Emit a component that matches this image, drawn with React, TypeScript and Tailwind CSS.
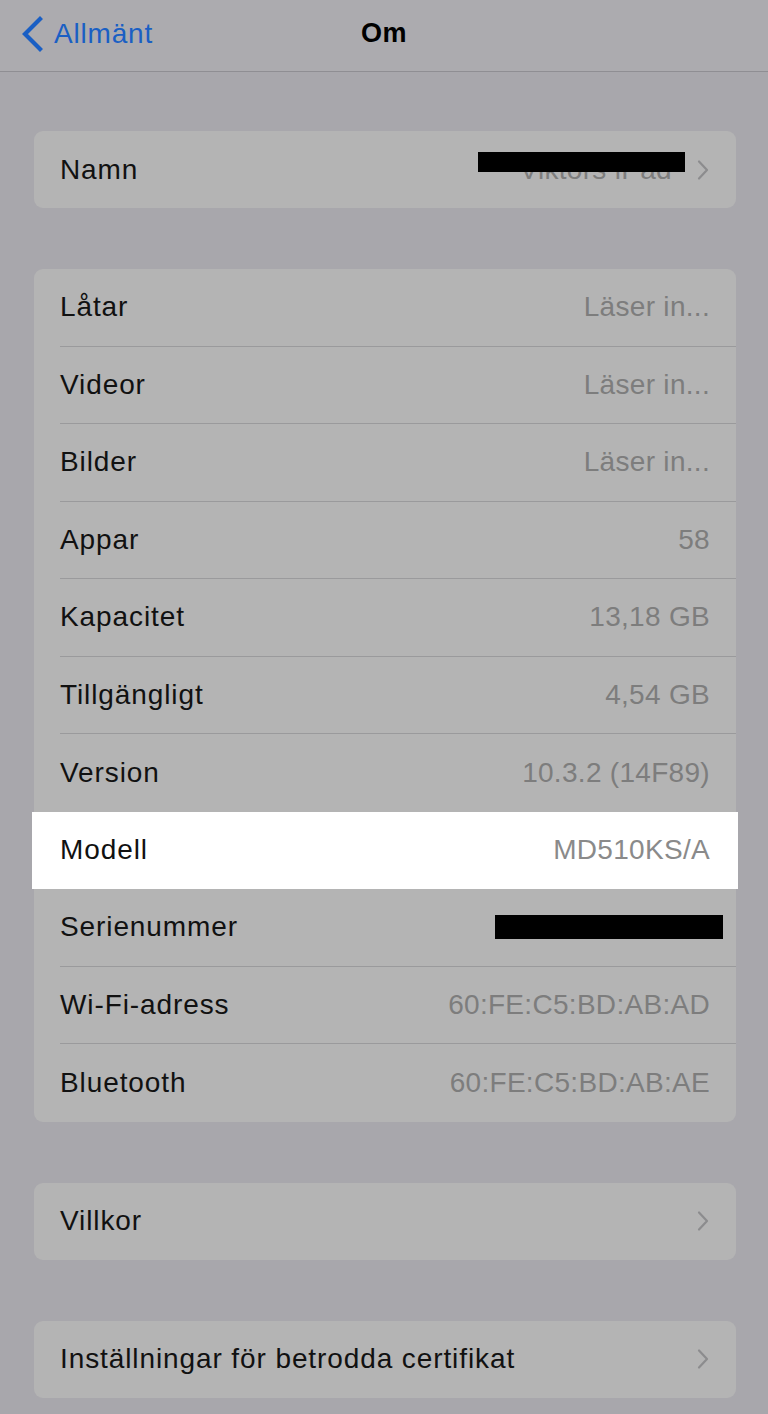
import React from "react";

const font = { fontFamily: '"Liberation Sans", Arial, sans-serif' };

function Chevron() {
  return (
    <svg width="14" height="22" viewBox="0 0 14 22" className="shrink-0">
      <path d="M3 2.5 L11 11 L3 19.5" fill="none" stroke="#8c8c8e" strokeWidth="2.2" strokeLinecap="round" strokeLinejoin="round" />
    </svg>
  );
}

type Row = { label: string; value?: string; redact?: boolean; highlight?: boolean };

const rows: Row[] = [
  { label: "Låtar", value: "Läser in..." },
  { label: "Videor", value: "Läser in..." },
  { label: "Bilder", value: "Läser in..." },
  { label: "Appar", value: "58" },
  { label: "Kapacitet", value: "13,18 GB" },
  { label: "Tillgängligt", value: "4,54 GB" },
  { label: "Version", value: "10.3.2 (14F89)" },
  { label: "Modell", value: "MD510KS/A", highlight: true },
  { label: "Serienummer", redact: true },
  { label: "Wi-Fi-adress", value: "60:FE:C5:BD:AB:AD" },
  { label: "Bluetooth", value: "60:FE:C5:BD:AB:AE" },
];

const labelCls = "text-[#111] tracking-[0.9px]";
const valueCls = "ml-auto text-[#7d7d7d] tracking-[0.3px]";

export default function App() {
  return (
    <div className="w-[768px] h-[1414px] bg-[#a8a7ac] overflow-hidden text-[28px]" style={font}>
      <div className="h-[72px] bg-[#acabaf] border-b border-[#8f8e93] flex items-center relative pb-[4px]">
        <div className="flex items-center pl-[20px] text-[#1a5fc4]">
          <svg width="24" height="36" viewBox="0 0 24 36">
            <path d="M20 3 L5 18 L20 33" fill="none" stroke="#1a5fc4" strokeWidth="4.2" strokeLinecap="square" />
          </svg>
          <span className="ml-[10px] text-[28px] leading-none tracking-[0.8px]">Allmänt</span>
        </div>
        <div className="absolute left-0 right-0 top-[20px] text-center text-[27px] font-bold leading-none text-black pointer-events-none tracking-[0.5px]">Om</div>
      </div>

      <div className="pl-[34px] pr-[32px] pt-[59px]">
        <div className="bg-[#b4b4b4] rounded-[9px] h-[77px] flex items-center pl-[26px] pr-[26px]">
          <span className={labelCls}>Namn</span>
          <div className="ml-auto flex items-center gap-[24px]">
            <div className="relative">
              <span className="text-[#7d7d7d] tracking-[0.3px]">Viktors iPad</span>
              <div className="absolute right-[-13px] w-[207px] top-[3px] h-[20px] bg-black" />
            </div>
            <Chevron />
          </div>
        </div>

        <div className="mt-[61px] bg-[#b4b4b4] rounded-[9px]">
          {rows.map((r, i) => (
            <div
              key={r.label}
              className={
                r.highlight
                  ? "bg-white mx-[-2px] px-[28px] h-[77.5px] flex items-center"
                  : "h-[77.5px] pl-[26px] flex flex-col"
              }
            >
              {r.highlight ? (
                <>
                  <span className={labelCls}>{r.label}</span>
                  <span className="ml-auto text-[#8a8a8a] tracking-[0.3px]">{r.value}</span>
                </>
              ) : (
                <>
                  <div className="flex-1 flex items-center pr-[26px]">
                    <span className={labelCls}>{r.label}</span>
                    {r.redact ? (
                      <div className="ml-auto mr-[-13px] w-[228px] h-[24px] bg-black" />
                    ) : (
                      <span className={valueCls}>{r.value}</span>
                    )}
                  </div>
                  {i < rows.length - 1 && !rows[i + 1].highlight ? (
                    <div className="h-px bg-[#9a9a9c]" />
                  ) : null}
                </>
              )}
            </div>
          ))}
        </div>

        <div className="mt-[61px] bg-[#b4b4b4] rounded-[9px] h-[77px] flex items-center pl-[26px] pr-[26px]">
          <span className={labelCls}>Villkor</span>
          <div className="ml-auto"><Chevron /></div>
        </div>

        <div className="mt-[61px] bg-[#b4b4b4] rounded-[9px] h-[77px] flex items-center pl-[26px] pr-[26px]">
          <span className={labelCls}>Inställningar för betrodda certifikat</span>
          <div className="ml-auto"><Chevron /></div>
        </div>
      </div>
    </div>
  );
}
